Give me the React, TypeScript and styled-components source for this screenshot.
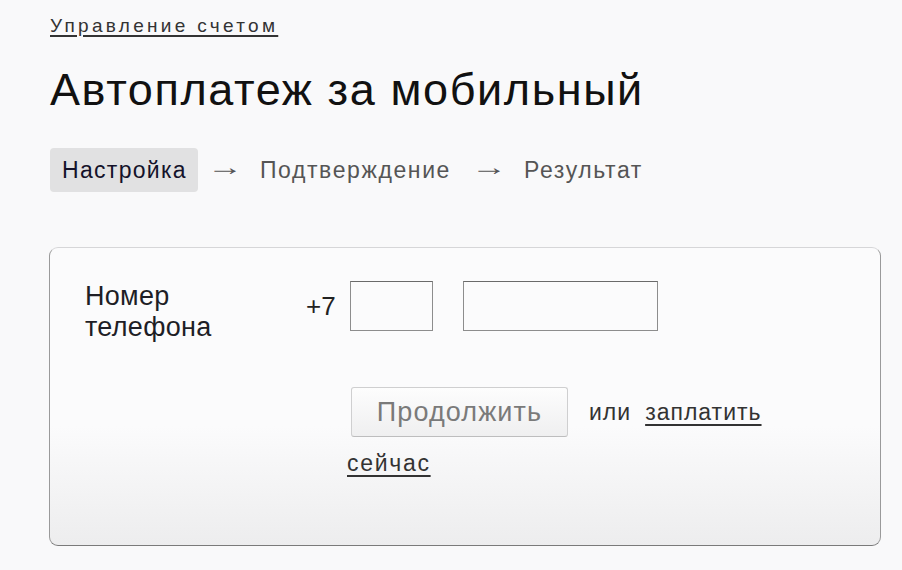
import React from "react";
import styled, { createGlobalStyle } from "styled-components";

const Global = createGlobalStyle`
  html, body { margin: 0; padding: 0; background: #f9f9fa; }
  body { font-family: "Liberation Sans", Arial, sans-serif; color: #222; }
`;

const Page = styled.div`
  width: 902px;
  height: 570px;
  box-sizing: border-box;
  padding: 14px 0 0 50px;
  overflow: hidden;
`;

const Crumb = styled.a`
  display: inline-block;
  font-size: 19px;
  letter-spacing: 3.3px;
  color: #333;
  text-decoration: underline;
  text-decoration-thickness: 2px;
  text-underline-offset: 3px;
  line-height: 24px;
`;

const Title = styled.h1`
  margin: 26px 0 0 0;
  font-size: 45px;
  font-weight: normal;
  color: #111;
  line-height: 52px;
  letter-spacing: 1.6px;
`;

const Steps = styled.div`
  display: flex;
  align-items: center;
  margin-top: 32px;
  height: 44px;
`;

const Step = styled.span<{ $active?: boolean }>`
  display: inline-flex;
  align-items: center;
  height: 44px;
  padding: 0 11px 0 12px;
  background: ${(p) => (p.$active ? "#e1e1e2" : "transparent")};
  border-radius: 4px;
  font-size: 23px;
  letter-spacing: ${(p) => (p.$active ? "1.3px" : "1.6px")};
  color: ${(p) => (p.$active ? "#14122a" : "#555")};
`;

const Arrow = styled.span`
  font-family: "Liberation Sans", Arial, sans-serif;
  font-size: 24px;
  line-height: 44px;
  color: #555;
  margin: 0 11px 0 15px;
  display: inline-block;
  width: 24px;
  text-align: center;
  transform: translateY(-3px) scaleX(1.5);
`;

const Card = styled.div`
  margin-top: 55px;
  margin-left: -1px;
  width: 832px;
  height: 299px;
  box-sizing: border-box;
  border: 1px solid #d6d6d8;
  border-bottom-color: #7a7a7a;
  border-right-color: #9a9a9a;
  border-left-color: #9a9a9a;
  border-radius: 9px;
  background: linear-gradient(#fbfbfc 0%, #fbfbfc 60%, #ededee 100%);
  display: grid;
  grid-template-columns: 221px 1fr;
  padding: 33px 0 0 35px;
`;

const Label = styled.div`
  font-size: 27px;
  line-height: 31px;
  color: #1e1e26;
  letter-spacing: 0.3px;
`;

const Fields = styled.div`
  display: flex;
  flex-direction: column;
`;

const PhoneRow = styled.div`
  display: flex;
  align-items: center;
`;

const Prefix = styled.span`
  font-size: 26px;
  color: #222;
  width: 44px;
`;

const Input = styled.div<{ $w: number }>`
  width: ${(p) => p.$w}px;
  height: 50px;
  box-sizing: border-box;
  border: 1px solid #8d8d8d;
  border-top-color: #6a6a6a;
  background: #fbfbfc;
  margin-right: 30px;
`;

const Actions = styled.div`
  display: flex;
  flex-wrap: wrap;
  align-items: center;
  margin-top: 56px;
  margin-left: 45px;
  width: 440px;
`;

const Button = styled.button`
  width: 217px;
  height: 50px;
  border: 1px solid #cfcfd0;
  border-bottom-color: #bdbdbe;
  border-radius: 3px;
  background: linear-gradient(#fdfdfd, #efeff0);
  font-family: "Liberation Sans", Arial, sans-serif;
  font-size: 27px;
  letter-spacing: 1.1px;
  color: #7a7a7a;
  padding: 0;
`;

const Or = styled.span`
  font-size: 23px;
  letter-spacing: 1px;
  color: #333;
  margin: 0 14px 0 21px;
`;

const Link = styled.a`
  font-size: 23px;
  letter-spacing: 1px;
  color: #333;
  text-decoration: underline;
  text-decoration-thickness: 2px;
  text-underline-offset: 4px;
`;

const SecondLine = styled(Link)`
  margin-left: -4px;
  margin-top: 13px;
  display: block;
  width: 100%;
  letter-spacing: 1.7px;
`;

export default function App() {
  return (
    <>
      <Global />
      <Page>
        <Crumb>Управление счетом</Crumb>
        <Title>Автоплатеж за мобильный</Title>
        <Steps>
          <Step $active>Настройка</Step>
          <Arrow>→</Arrow>
          <Step>Подтверждение</Step>
          <Arrow>→</Arrow>
          <Step>Результат</Step>
        </Steps>
        <Card>
          <Label>
            Номер
            <br />
            телефона
          </Label>
          <Fields>
            <PhoneRow>
              <Prefix>+7</Prefix>
              <Input $w={83} />
              <Input $w={195} />
            </PhoneRow>
            <Actions>
              <Button>Продолжить</Button>
              <Or>или</Or>
              <Link>заплатить</Link>
              <SecondLine>сейчас</SecondLine>
            </Actions>
          </Fields>
        </Card>
      </Page>
    </>
  );
}
